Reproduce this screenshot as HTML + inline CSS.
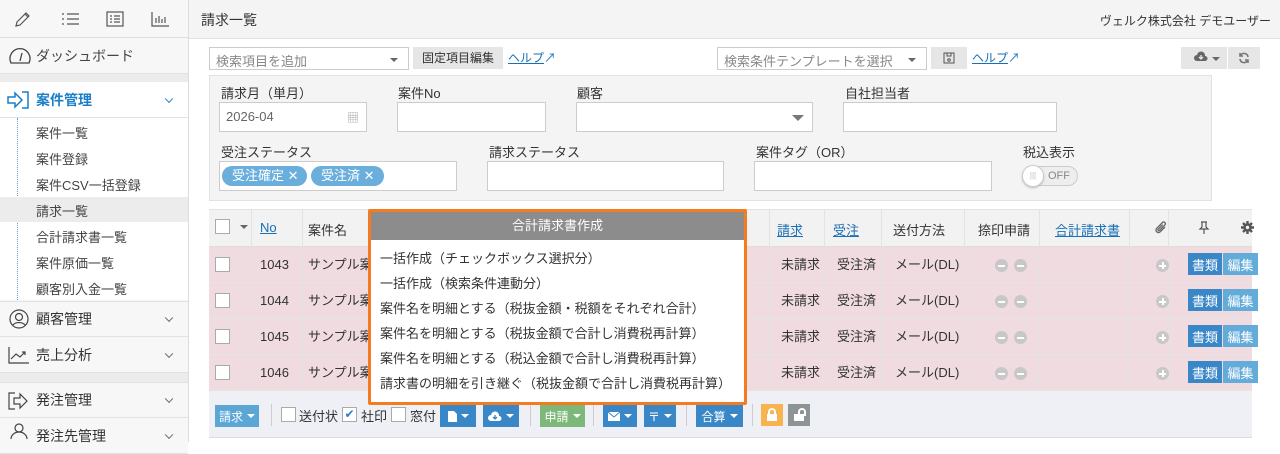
<!DOCTYPE html>
<html><head><meta charset="utf-8"><style>
*{box-sizing:border-box;margin:0;padding:0}
body{width:1280px;height:442px;overflow:hidden;font-family:"Liberation Sans","Noto Sans CJK JP",sans-serif;font-size:13px;color:#333;background:#fff;position:relative}
.abs{position:absolute}
#side{left:0;top:0;width:189px;height:442px;background:#f7f7f7;border-right:1px solid #ddd}
.nav{position:absolute;left:0;width:188px;border-bottom:1px solid #e2e2e2;background:#f7f7f7;font-size:14px;display:flex;align-items:center;padding-left:36px}
.nav .chev{position:absolute;right:16px;top:50%;width:6px;height:6px;border-right:1px solid #666;border-bottom:1px solid #666;transform:translateY(-70%) rotate(45deg)}
.sub{position:absolute;left:36px;font-size:13px;color:#444}
.inp{position:absolute;background:#fff;border:1px solid #ccc;height:30px}
.lbl{position:absolute;font-size:13px;color:#333}
.btn{position:absolute;color:#fff;font-size:12px;display:flex;align-items:center;justify-content:center;height:22px}
.caret{display:inline-block;width:0;height:0;border-left:4px solid transparent;border-right:4px solid transparent;border-top:4px solid currentColor;margin-left:4px}
.row{position:absolute;left:209px;width:1043px;height:36px;background:#efdbe0;border-bottom:1px solid #e5e5e5}
.cell{position:absolute;top:0;height:36px;line-height:36px;font-size:13px}
.vl{position:absolute;top:0;width:1px;height:100%;background:#e3e3e3}
.cb{position:absolute;width:15px;height:15px;border:1px solid #aaa;background:#fff}
.minus{display:inline-block;width:13px;height:13px;border-radius:50%;background:#c8c8c8;position:relative;margin:0 3px;vertical-align:middle}
.minus:after{content:"";position:absolute;left:3px;top:5.5px;width:7px;height:2px;background:#fff}
.plus:before{content:"";position:absolute;left:5.5px;top:3px;width:2px;height:7px;background:#fff}
a{color:#1a6fb5;text-decoration:underline}
.lock{position:relative;width:10px;height:7px;background:#fff;margin-top:5px}
.lock:before{content:"";position:absolute;left:1px;top:-6px;width:8px;height:8px;border:2px solid #fff;border-bottom:none;border-radius:4px 4px 0 0;box-sizing:border-box}
.unl:before{left:4px;top:-6px}
</style></head><body>
<div id="side" class="abs">
 <div class="abs" style="left:0;top:0;width:188px;height:38px;border-bottom:1px solid #ddd;background:#f7f7f7"></div>
 <svg class="abs" style="left:14px;top:9px" width="160" height="20" viewBox="0 0 160 20" fill="none" stroke="#555" stroke-width="1.2">
  <path d="M2 17l1-4 9-9 3 3-9 9z M11 5l3 3"/>
  <path d="M48 5h2M48 10h2M48 15h2M53 5h12M53 10h12M53 15h12"/>
  <rect x="93" y="3" width="16" height="14"/><path d="M96 7h2M96 10h2M96 13h2M100 7h6M100 10h6M100 13h6"/>
  <path d="M138 3v14h17M142 14v-5M145 14v-7M148 14v-4M151 14v-6"/>
 </svg>
 <div class="nav" style="top:38px;height:36px;color:#444">ダッシュボード</div>
 <svg class="abs" style="left:8px;top:47px" width="24" height="18" viewBox="0 0 24 18" fill="none" stroke="#444" stroke-width="1.3"><path d="M3 16a10 10 0 1 1 18 0z"/><path d="M12 14l2-8"/></svg>
 <div class="abs" style="left:0;top:74px;width:188px;height:8px;background:#ececec"></div>
 <div class="nav" style="top:82px;height:36px;background:#fff;color:#1a7fc8;font-weight:bold;font-size:14px">案件管理<span class="chev" style="border-color:#1a7fc8"></span></div>
 <svg class="abs" style="left:7px;top:91px" width="24" height="18" viewBox="0 0 24 18" fill="none" stroke="#1a7fc8" stroke-width="1.5"><path d="M1 6h7V2l7 7-7 7v-4H1z M15 1h6v16h-6"/></svg>
 <div class="abs" style="left:0;top:118px;width:188px;height:182px;background:#fff"></div>
 <div class="abs" style="left:17px;top:118px;height:182px;border-left:1px dotted #6a9fd0"></div>
 <div class="abs" style="left:0;top:197px;width:188px;height:25px;background:#ececec"></div>
 <div class="sub" style="top:123px">案件一覧</div>
 <div class="sub" style="top:149px">案件登録</div>
 <div class="sub" style="top:175px">案件CSV一括登録</div>
 <div class="sub" style="top:201px">請求一覧</div>
 <div class="sub" style="top:227px">合計請求書一覧</div>
 <div class="sub" style="top:253px">案件原価一覧</div>
 <div class="sub" style="top:279px">顧客別入金一覧</div>
 <div class="nav" style="top:301px;height:36px;border-top:1px solid #e2e2e2">顧客管理<span class="chev"></span></div>
 <div class="nav" style="top:337px;height:36px">売上分析<span class="chev"></span></div>
 <div class="abs" style="left:0;top:373px;width:188px;height:9px;background:#ececec"></div>
 <div class="nav" style="top:382px;height:36px;border-top:1px solid #e2e2e2">発注管理<span class="chev"></span></div>
 <div class="nav" style="top:418px;height:36px">発注先管理<span class="chev"></span></div>
 <svg class="abs" style="left:8px;top:309px" width="22" height="130" viewBox="0 0 22 130" fill="none" stroke="#444" stroke-width="1.2">
  <circle cx="11" cy="10" r="9"/><circle cx="11" cy="8" r="3.5"/><path d="M5 16a7 5 0 0 1 12 0"/>
  <path d="M1 38v16h20M3 50l5-5 4 3 5-5M14 43h3v3"/>
  <path d="M7 84H1v16h6M6 89h6v-4l7 7-7 7v-4H6z"/>
  <circle cx="11" cy="119" r="4"/><path d="M3 130a8 7 0 0 1 16 0"/>
 </svg>
</div>

<div class="abs" style="left:189px;top:0;width:1091px;height:39px;background:#f4f4f4;border-bottom:1px solid #e0e0e0"></div>
<div class="abs" style="left:201px;top:10px;font-size:14px">請求一覧</div>
<div class="abs" style="right:9px;top:12px;font-size:12px">ヴェルク株式会社 デモユーザー</div>

<div class="inp" style="left:209px;top:47px;width:200px;height:23px;font-size:13px;color:#888;padding:3px 6px">検索項目を追加<span class="caret" style="position:absolute;right:10px;top:10px;color:#666"></span></div>
<div class="abs" style="left:413px;top:47px;width:90px;height:22px;background:#e6e6e6;font-size:12px;line-height:22px;text-align:center">固定項目編集</div>
<div class="abs" style="left:508px;top:49px;font-size:12px"><a>ヘルプ</a><span style="color:#1a6fb5">↗</span></div>
<div class="inp" style="left:717px;top:47px;width:210px;height:23px;font-size:13px;color:#888;padding:3px 6px">検索条件テンプレートを選択<span class="caret" style="position:absolute;right:10px;top:10px;color:#666"></span></div>
<div class="abs" style="left:931px;top:47px;width:36px;height:22px;background:#e6e6e6"></div>
<svg class="abs" style="left:943px;top:52px" width="12" height="12" fill="none" stroke="#555"><rect x="1" y="1" width="10" height="10"/><rect x="4" y="1" width="4" height="3"/><circle cx="6" cy="8" r="1.3"/></svg>
<div class="abs" style="left:972px;top:49px;font-size:12px"><a>ヘルプ</a><span style="color:#1a6fb5">↗</span></div>
<div class="abs" style="left:1181px;top:47px;width:46px;height:22px;background:#e6e6e6;color:#666;font-size:11px;line-height:22px;padding-left:13px"><svg width="14" height="11" viewBox="0 0 14 11" style="vertical-align:-1px"><path d="M3 10a3 3 0 0 1 0-6 4 4 0 0 1 8 1 2.5 2.5 0 0 1 0 5z" fill="#666"/><path d="M7 4v4M5 6l2 2 2-2" stroke="#e6e6e6" fill="none" stroke-width="1.3"/></svg><span class="caret"></span></div>
<div class="abs" style="left:1228px;top:47px;width:32px;height:22px;background:#e6e6e6"></div>
<svg class="abs" style="left:1238px;top:52px" width="12" height="12" viewBox="0 0 12 12" fill="none" stroke="#777" stroke-width="1.6"><path d="M10 5a4 4 0 0 0-7.5-1.5M2 7a4 4 0 0 0 7.5 1.5"/><path d="M2 1v3h3M10 11V8H7" /></svg>

<div class="abs" style="left:209px;top:75px;width:1003px;height:126px;background:#f4f4f4;border:1px solid #e2e2e2"></div>
<div class="lbl" style="left:221px;top:83px">請求月（単月）</div>
<div class="inp" style="left:219px;top:102px;width:148px;color:#666;padding:6px 6px;font-size:13px">2026-04<span style="position:absolute;right:7px;top:6px;color:#aaa;font-size:12px">▦</span></div>
<div class="lbl" style="left:398px;top:83px">案件No</div>
<div class="inp" style="left:397px;top:102px;width:149px"></div>
<div class="lbl" style="left:577px;top:83px">顧客</div>
<div class="inp" style="left:576px;top:102px;width:237px"><span class="caret" style="position:absolute;right:8px;top:12px;color:#777;border-width:6px 6px 0;border-left-width:6px;border-right-width:6px"></span></div>
<div class="lbl" style="left:845px;top:83px">自社担当者</div>
<div class="inp" style="left:843px;top:102px;width:214px"></div>
<div class="lbl" style="left:221px;top:142px">受注ステータス</div>
<div class="inp" style="left:219px;top:161px;width:238px"></div>
<div class="abs" style="left:222px;top:166px;width:85px;height:20px;border-radius:10px;background:#6aaedc;color:#fff;font-size:13px;line-height:20px;padding-left:10px">受注確定 ✕</div>
<div class="abs" style="left:311px;top:166px;width:73px;height:20px;border-radius:10px;background:#6aaedc;color:#fff;font-size:13px;line-height:20px;padding-left:10px">受注済 ✕</div>
<div class="lbl" style="left:489px;top:142px">請求ステータス</div>
<div class="inp" style="left:487px;top:161px;width:237px"></div>
<div class="lbl" style="left:756px;top:142px">案件タグ（OR）</div>
<div class="inp" style="left:754px;top:161px;width:238px"></div>
<div class="lbl" style="left:1023px;top:142px">税込表示</div>
<div class="abs" style="left:1022px;top:166px;width:56px;height:20px;border-radius:10px;background:#eee;border:1px solid #ccc;font-size:11px;color:#888;line-height:18px;padding-left:25px">OFF</div>
<div class="abs" style="left:1022px;top:165px;width:22px;height:22px;border-radius:50%;background:#fff;border:1px solid #ccc;box-shadow:0 1px 2px #bbb;font-size:8px;color:#bbb;text-align:center;line-height:20px">|||</div>

<div class="abs" style="left:209px;top:209px;width:1043px;height:38px;background:#f2f2f2;border-top:1px solid #e2e2e2;border-bottom:1px solid #ddd"></div>
<div class="cb" style="left:215px;top:219px"></div><span class="caret abs" style="left:236px;top:225px;color:#666"></span>
<div class="abs" style="left:260px;top:220px"><a>No</a></div>
<div class="abs" style="left:308px;top:220px">案件名</div>
<div class="abs" style="left:777px;top:220px"><a>請求</a></div>
<div class="abs" style="left:833px;top:220px"><a>受注</a></div>
<div class="abs" style="left:893px;top:220px">送付方法</div>
<div class="abs" style="left:978px;top:220px">捺印申請</div>
<div class="abs" style="left:1055px;top:220px"><a>合計請求書</a></div>
<svg class="abs" style="left:1154px;top:220px" width="14" height="16" viewBox="0 0 14 16" fill="none" stroke="#666" stroke-width="1.3"><path d="M11 7l-5 5a2.5 2.5 0 0 1-3.5-3.5l6-6a1.7 1.7 0 0 1 2.4 2.4l-5.5 5.5a.8.8 0 0 1-1.2-1.2l4.5-4.5"/></svg>
<svg class="abs" style="left:1198px;top:221px" width="12" height="14" viewBox="0 0 12 14" fill="none" stroke="#555" stroke-width="1.2"><path d="M3 1h6M4 1v5l-2 2h8L8 6V1M6 8v5"/></svg>
<svg class="abs" style="left:1241px;top:221px" width="13" height="13" viewBox="0 0 13 13"><circle cx="6.5" cy="6.5" r="4.2" fill="#555"/><g stroke="#555" stroke-width="2.4"><path d="M6.5 0v13M0 6.5h13M2 2l9 9M11 2l-9 9"/></g><circle cx="6.5" cy="6.5" r="1.7" fill="#f2f2f2"/></svg>
<div class="abs" style="left:209px;top:209px;width:1043px;height:182px">
 <div class="vl" style="left:42px"></div><div class="vl" style="left:93px"></div><div class="vl" style="left:560px"></div><div class="vl" style="left:615px"></div><div class="vl" style="left:672px"></div><div class="vl" style="left:755px"></div><div class="vl" style="left:830px"></div><div class="vl" style="left:920px"></div><div class="vl" style="left:959px"></div>
</div>

<div class="row" style="top:247px"></div>
<div class="row" style="top:283px"></div>
<div class="row" style="top:319px"></div>
<div class="row" style="top:355px"></div>
<div class="abs" style="left:209px;top:247px;width:1043px;height:144px">
 <div class="vl" style="left:42px"></div><div class="vl" style="left:93px"></div><div class="vl" style="left:560px"></div><div class="vl" style="left:615px"></div><div class="vl" style="left:672px"></div><div class="vl" style="left:755px"></div><div class="vl" style="left:830px"></div><div class="vl" style="left:920px"></div><div class="vl" style="left:959px"></div>
</div>
<div id="rows"></div>
<script>
var h='';[1043,1044,1045,1046].forEach(function(n,i){var t=247+i*36;
h+='<div class="cb" style="left:215px;top:'+(t+10)+'px"></div>'+
'<div class="cell abs" style="left:260px;top:'+t+'px">'+n+'</div>'+
'<div class="cell abs" style="left:308px;top:'+t+'px">サンプル案</div>'+
'<div class="cell abs" style="left:781px;top:'+t+'px">未請求</div>'+
'<div class="cell abs" style="left:837px;top:'+t+'px">受注済</div>'+
'<div class="cell abs" style="left:895px;top:'+t+'px">メール(DL)</div>'+
'<div class="cell abs" style="left:992px;top:'+t+'px"><span class="minus"></span><span class="minus"></span></div>'+
'<div class="cell abs" style="left:1153px;top:'+t+'px"><span class="minus plus"></span></div>'+
'<div class="btn" style="left:1188px;top:'+(t+6)+'px;width:34px;background:#3a87c8;font-size:13px">書類</div>'+
'<div class="btn" style="left:1223px;top:'+(t+6)+'px;width:35px;background:#63acd9;font-size:13px">編集</div>';});
document.getElementById('rows').innerHTML=h;
</script>

<div class="abs" style="left:209px;top:391px;width:1043px;height:47px;background:#eef0f5;border-bottom:1px solid #ddd"></div>
<div class="btn" style="left:215px;top:405px;width:44px;background:#5aa7d6">請求<span class="caret"></span></div>
<div class="cb" style="left:281px;top:407px"></div><div class="abs" style="left:299px;top:406px">送付状</div>
<div class="cb" style="left:342px;top:407px;color:#2a7fc8;font-size:12px;line-height:12px;text-align:center">✔</div><div class="abs" style="left:361px;top:406px">社印</div>
<div class="cb" style="left:391px;top:407px"></div><div class="abs" style="left:410px;top:406px">窓付</div>
<div class="btn" style="left:440px;top:405px;width:36px;background:#3a87c8"><svg width="9" height="11" viewBox="0 0 9 11"><path d="M0 0h6l3 3v8H0z" fill="#fff"/></svg><span class="caret"></span></div>
<div class="btn" style="left:483px;top:405px;width:36px;background:#3a87c8"><svg width="14" height="11" viewBox="0 0 14 11"><path d="M3 10a3 3 0 0 1 0-6 4 4 0 0 1 8 1 2.5 2.5 0 0 1 0 5z" fill="#fff"/><path d="M7 4v4M5 6l2 2 2-2" stroke="#3a87c8" fill="none" stroke-width="1.3"/></svg><span class="caret"></span></div>
<div class="btn" style="left:540px;top:405px;width:45px;background:#7db87a">申請<span class="caret"></span></div>
<div class="btn" style="left:603px;top:405px;width:34px;background:#3a87c8"><svg width="12" height="9" viewBox="0 0 12 9"><rect width="12" height="9" fill="#fff"/><path d="M0 0l6 5 6-5" stroke="#3a87c8" fill="none"/></svg><span class="caret"></span></div>
<div class="btn" style="left:644px;top:405px;width:32px;background:#3a87c8">〒<span class="caret"></span></div>
<div class="btn" style="left:696px;top:405px;width:47px;background:#3a87c8">合算<span class="caret"></span></div>
<div class="btn" style="left:761px;top:404px;width:22px;background:#f8b24e"><div class="lock"></div></div>
<div class="btn" style="left:788px;top:404px;width:22px;background:#8c9496"><div class="lock unl"></div></div>
<div class="abs" style="left:271px;top:404px;width:1px;height:22px;background:#ccc"></div>
<div class="abs" style="left:530px;top:404px;width:1px;height:22px;background:#ccc"></div>
<div class="abs" style="left:593px;top:404px;width:1px;height:22px;background:#ccc"></div>
<div class="abs" style="left:686px;top:404px;width:1px;height:22px;background:#ccc"></div>
<div class="abs" style="left:752px;top:404px;width:1px;height:22px;background:#ccc"></div>

<div class="abs" style="left:368px;top:209px;width:379px;height:196px;border:3px solid #f47b20;background:#fff;border-radius:2px">
 <div style="height:28px;background:#8c8c8c;color:#fff;text-align:center;line-height:28px;font-size:13px">合計請求書作成</div>
 <div style="padding:6px 0 0 9px;font-size:13px;line-height:25px;color:#333">
  一括作成（チェックボックス選択分）<br>一括作成（検索条件連動分）<br>案件名を明細とする（税抜金額・税額をそれぞれ合計）<br>案件名を明細とする（税抜金額で合計し消費税再計算）<br>案件名を明細とする（税込金額で合計し消費税再計算）<br>請求書の明細を引き継ぐ（税抜金額で合計し消費税再計算）
 </div>
</div>
</body></html>
